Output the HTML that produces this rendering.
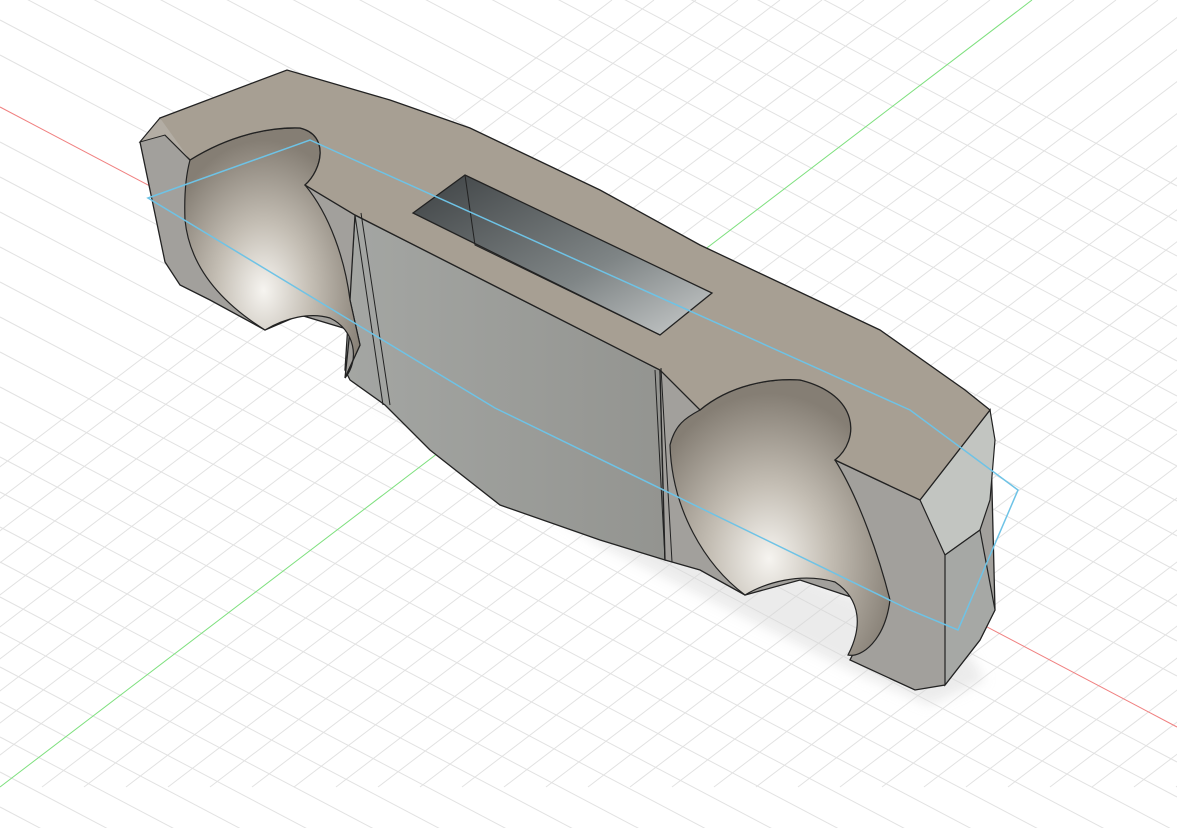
<!DOCTYPE html>
<html><head><meta charset="utf-8"><style>
html,body{margin:0;padding:0;background:#fff;overflow:hidden;width:1177px;height:828px}
svg{display:block;overflow:hidden}
</style></head><body>
<svg width="1177" height="828" viewBox="0 0 1177 828" xmlns="http://www.w3.org/2000/svg" overflow="hidden">
<defs>
<radialGradient id="hole" cx="0.45" cy="0.65" r="0.6">
<stop offset="0" stop-color="#f6f4f0"/><stop offset="0.45" stop-color="#c4beb4"/><stop offset="1" stop-color="#857e74"/>
</radialGradient>
<linearGradient id="slot" x1="0" y1="0" x2="1" y2="1">
<stop offset="0" stop-color="#3e4244"/><stop offset="0.6" stop-color="#7f8586"/><stop offset="1" stop-color="#c9cccc"/>
</linearGradient>
<linearGradient id="front" x1="0" y1="0" x2="1" y2="0">
<stop offset="0" stop-color="#a4a6a3"/><stop offset="1" stop-color="#939490"/>
</linearGradient>
<filter id="blur"><feGaussianBlur stdDeviation="6"/></filter>
<clipPath id="c"><rect width="1177" height="828"/></clipPath>
</defs>
<g clip-path="url(#c)">
<rect width="1177" height="828" fill="#fff"/>
<g stroke="#e2e2e2" stroke-width="1" fill="none">
<path d="M0,-435 L1177,186 M0,-400 L1177,221 M0,-365 L1177,256 M0,-330 L1177,291 M0,-295 L1177,326 M0,-260 L1177,361 M0,-225 L1177,396 M0,-190 L1177,431 M0,-155 L1177,466 M0,-120 L1177,501 M0,-85 L1177,536 M0,-50 L1177,571 M0,-15 L1177,606 M0,20 L1177,641 M0,55 L1177,676 M0,142 L1177,762 M0,177 L1177,797 M0,212 L1177,832 M0,247 L1177,867 M0,282 L1177,902 M0,317 L1177,937 M0,352 L1177,972 M0,387 L1177,1007 M0,422 L1177,1042 M0,457 L1177,1077 M0,492 L1177,1112 M0,527 L1177,1147 M0,562 L1177,1182 M0,597 L1177,1217 M0,632 L1177,1252 M0,667 L1177,1287 M0,702 L1177,1322 M0,737 L1177,1357 M0,772 L1177,1392 M0,807 L1177,1427"/>
<path d="M612,0 L-420,787 M654,0 L-378,787 M696,0 L-336,787 M738,0 L-294,787 M780,0 L-252,787 M822,0 L-210,787 M864,0 L-168,787 M906,0 L-126,787 M948,0 L-84,787 M990,0 L-42,787 M1074,0 L42,787 M1116,0 L84,787 M1158,0 L126,787 M1200,0 L168,787 M1242,0 L210,787 M1284,0 L252,787 M1326,0 L294,787 M1368,0 L336,787 M1410,0 L378,787 M1452,0 L420,787 M1494,0 L462,787 M1536,0 L504,787 M1578,0 L546,787 M1620,0 L588,787 M1662,0 L630,787 M1704,0 L672,787 M1746,0 L714,787 M1788,0 L756,787 M1830,0 L798,787 M1872,0 L840,787 M1914,0 L882,787 M1956,0 L924,787 M1998,0 L966,787 M2040,0 L1008,787 M2082,0 L1050,787 M2124,0 L1092,787 M2166,0 L1134,787 M2208,0 L1176,787 M2250,0 L1218,787"/>
</g>
<line x1="0" y1="107" x2="1177" y2="727" stroke="#f08080" stroke-width="1"/>
<line x1="1032" y1="0" x2="0" y2="787" stroke="#7ee07e" stroke-width="1"/>
<path d="M360,390 L600,545 L850,670 L930,705 L985,680 L960,640 Z" fill="#d8d8d8" opacity="0.5" filter="url(#blur)"/>
<path d="M355,215 L660,370 L665,560 L600,540 L500,505 L430,450 L385,405 L350,380 L345,370 Z" fill="url(#front)" stroke="#222" stroke-width="1.3"/>
<path d="M140,142 L160,118 L300,130 L325,150 L305,185 L355,215 L350,300 L360,345 L345,378 L350,330 L300,315 L265,330 L210,300 L180,285 L165,262 Z" fill="#a2a09c" stroke="#222" stroke-width="1.3"/>
<path d="M190,160 C230,135 270,127 300,128 C330,135 322,170 305,185 C330,215 345,260 350,300 L360,345 L345,378 C360,360 355,330 330,318 C310,312 285,318 265,330 C225,305 190,270 185,220 C184,195 186,175 190,160 Z" fill="url(#hole)" stroke="#222" stroke-width="1.2"/>
<path d="M660,370 L835,460 L920,500 L990,410 L995,610 L980,640 L945,685 L915,690 L850,660 L865,630 L860,600 L800,580 L745,595 L700,570 L665,560 Z" fill="#a2a09c" stroke="#222" stroke-width="1.3"/>
<path d="M700,410 C730,385 770,378 800,380 C860,392 862,440 835,460 C860,500 880,560 890,600 C885,640 862,658 848,655 C862,628 862,600 835,582 C800,572 765,583 745,595 C705,565 672,510 670,445 C675,425 685,418 700,410 Z" fill="url(#hole)" stroke="#222" stroke-width="1.2"/>
<path d="M920,500 L990,410 L995,440 L990,500 L980,530 L945,555 Z" fill="#c2c5c1" stroke="#222" stroke-width="1.2"/>
<path d="M945,555 L980,530 L995,610 L980,640 L945,685 Z" fill="#a6a8a5" stroke="#222" stroke-width="1.2"/>
<path d="M160,118 L287,70 L390,100 L470,128 L600,190 L700,245 L880,330 L965,390 L990,410 L920,500 L835,460 C860,440 860,395 800,380 C770,378 730,385 700,410 L660,370 L355,215 L305,185 C322,170 330,135 300,128 C270,127 230,135 190,160 L165,135 Z" fill="#a79f93" stroke="#222" stroke-width="1.3"/>
<path d="M160,118 L140,142 L165,135 L190,160" fill="#b3ada4" stroke="#222" stroke-width="1"/>
<path d="M413,213 L465,175 L712,293 L660,335 Z" fill="url(#slot)" stroke="#222" stroke-width="1.3"/>
<path d="M465,175 L475,245 L660,335" fill="none" stroke="#222" stroke-width="1"/>
<path d="M355,215 L383,405 M361,213 L390,405 M655,370 L665,560 M661,368 L672,562" stroke="#222" stroke-width="1" fill="none"/>
<path d="M148,198 L310,140 L910,410 L1018,490 L958,630 L910,610 L495,408 Z" fill="none" stroke="#6ec3e6" stroke-width="1.5"/>
</g>
</svg>
</body></html>
